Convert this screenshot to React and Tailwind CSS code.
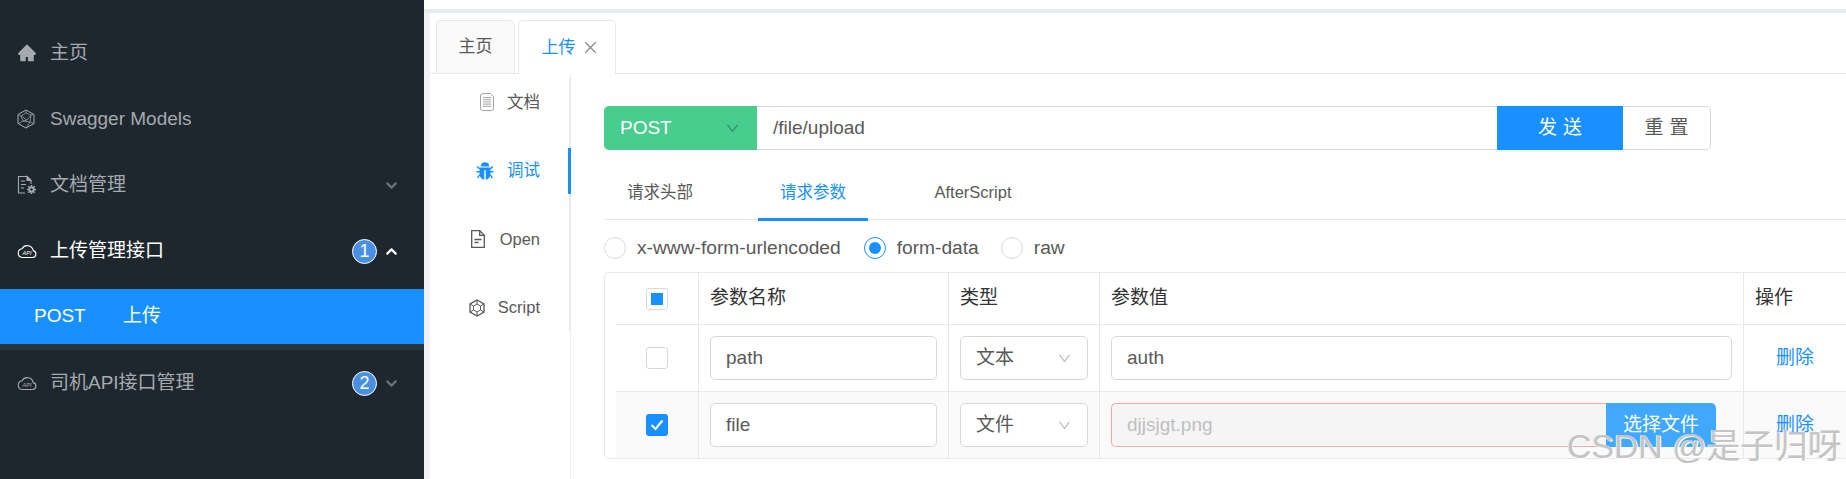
import React from 'react';
import { AiFillHome, AiFillBug, AiOutlineDown, AiOutlineClose } from 'react-icons/ai';
import { LuChevronDown, LuChevronUp } from 'react-icons/lu';

const ModelIcon = () => (
  <svg width="18" height="20" viewBox="0 0 18 20" fill="none" stroke="currentColor" strokeWidth="1">
    <path d="M9 1l8 4.500v9L9 19l-8-4.500v-9z" />
    <path d="M9 1v3l5 2 3-.5M14 6l-1 7 4 1.500M13 13l-4 6M13 13l-7-1-5 2.500M6 12L4 7 1 5.500M4 7l5-3M4 7l6 4 4-5M6 12l4-1" strokeWidth="0.7" />
  </svg>
);

const DocGearIcon = () => (
  <svg width="20" height="20" viewBox="0 0 20 20" fill="none" stroke="currentColor" strokeWidth="1.100">
    <path d="M8 18H1.500V1.500H10l4 4v3.500" />
    <path d="M10 1.500l4 4h-4z" fill="currentColor" />
    <path d="M4 6h4M4 9.500h5M4 13h3" />
    <circle cx="14.500" cy="14.500" r="2.200" strokeWidth="2" />
    <path d="M14.500 10v1.500M14.500 17.500V19M10 14.500h1.500M17.500 14.500H19M11.300 11.300l1 1M16.700 16.700l1 1M11.300 17.700l1-1M16.700 12.300l1-1" strokeWidth="1.600" />
  </svg>
);

const ApiCloudIcon = () => (
  <svg width="20" height="16" viewBox="0 0 20 16" fill="none" stroke="currentColor" strokeWidth="1.100">
    <path d="M5 14.500h10.500a3.500 3.500 0 0 0 .7-6.900A6 6 0 0 0 5 5.800a4.400 4.400 0 0 0 0 8.700z" />
    <text x="10" y="12.300" textAnchor="middle" fontSize="5.500" fontStyle="italic" stroke="none" fill="currentColor" fontFamily="Liberation Sans">API</text>
  </svg>
);

const SheetIcon = () => (
  <svg width="14" height="18" viewBox="0 0 14 18" fill="none" stroke="#a3a3a3" strokeWidth="1">
    <path d="M3 .5h7.500l3 3V15.500a2 2 0 0 1-2 2H2.500a2 2 0 0 1-2-2V3a2.500 2.500 0 0 1 2.500-2.500z" />
    <path d="M3 4.500h8M3 6.700h8M3 8.900h8M3 11.100h8M3 13.300h8" />
  </svg>
);

const OpenFileIcon = () => (
  <svg width="14" height="18" viewBox="0 0 14 18" fill="none" stroke="currentColor" strokeWidth="1.300">
    <path d="M.7.7h8l4.600 4.600v12H.7z" />
    <path d="M8.700.7v4.600h4.600M3.500 9.500h7M3.500 12.500h4" />
  </svg>
);

const ScriptIcon = () => (
  <svg width="18" height="18" viewBox="0 0 18 18" fill="none" stroke="currentColor" strokeWidth="1.300">
    <path d="M9 1l7 4v8l-7 4-7-4V5z" />
    <path d="M9 5l3.500 2v4L9 13l-3.500-2V7zM9 1v4M2 5l3.500 2M16 5l-3.500 2M9 13v4M2 13l3.500-2M16 13l-3.500-2" strokeWidth="1" />
  </svg>
);

const Badge = ({ n }) => (
  <span className="flex h-[25px] w-[25px] items-center justify-center rounded-full border border-white bg-[#4a90e2] text-[18px] text-white">
    {n}
  </span>
);

const MenuRow = ({ icon, label, badge, chevron, active }) => (
  <div className={`flex h-[66px] items-center pl-[17px] pr-[24px] text-[19px] ${active ? 'text-white' : 'text-[#a5aaae]'}`}>
    <span className="flex w-[33px] shrink-0 items-center">{icon}</span>
    <span className="flex-1">{label}</span>
    {badge && <Badge n={badge} />}
    {chevron === 'down' && <LuChevronDown size={17} strokeWidth={3} className="ml-[6px] text-[#6c7276]" />}
    {chevron === 'up' && <LuChevronUp size={17} strokeWidth={3} className="ml-[6px] text-white" />}
  </div>
);

const Sidebar = () => (
  <aside className="h-full w-[424px] shrink-0 bg-[#1f272e] pt-[20px]">
    <MenuRow icon={<AiFillHome size={20} />} label="主页" />
    <MenuRow icon={<ModelIcon />} label="Swagger Models" />
    <MenuRow icon={<DocGearIcon />} label="文档管理" chevron="down" />
    <MenuRow icon={<ApiCloudIcon />} label="上传管理接口" badge="1" chevron="up" active />
    <div className="mt-[5px] flex h-[55px] items-center bg-[#1890ff] pl-[34px] text-[19px] text-white">
      <span className="w-[89px]">POST</span>
      <span>上传</span>
    </div>
    <div className="h-[6px] bg-[#2a363c]" />
    <MenuRow icon={<ApiCloudIcon />} label="司机API接口管理" badge="2" chevron="down" />
  </aside>
);

const TabBar = () => (
  <div className="flex h-[61px] shrink-0 items-end gap-[3px] border-b border-[#e8e8e8] pl-[6px] text-[17px]">
    <div className="-mb-px flex h-[54px] w-[79px] items-center justify-center rounded-t-[5px] border border-[#e8e8e8] bg-[#fafafa] text-[#595959]">
      主页
    </div>
    <div className="-mb-px flex h-[54px] w-[98px] items-center justify-center gap-[6px] rounded-t-[5px] border border-b-0 border-[#e8e8e8] bg-white pl-[6px] text-[#1890ff]">
      <span>上传</span>
      <AiOutlineClose size={17} className="text-[#8c8c8c]" />
    </div>
  </div>
);

const SideNav = () => {
  const items = [
    { icon: <SheetIcon />, label: '文档', gap: 'gap-[13px]' },
    { icon: <AiFillBug size={20} className="text-[#1890ff]" />, label: '调试', gap: 'gap-[12px]', active: true },
    { icon: <OpenFileIcon />, label: 'Open', gap: 'gap-[15px]' },
    { icon: <ScriptIcon />, label: 'Script', gap: 'gap-[12px]' },
  ];
  return (
    <div className="h-full w-[141px] shrink-0 border-r border-[#eeeeee] pt-[5px]">
      <div className="relative -mr-px flex flex-col gap-[22.500px] border-r-2 border-[#e8e8e8] pr-[29px]">
        {items.map((it) => (
          <div
            key={it.label}
            className={`relative flex h-[46px] items-center justify-end text-[16.500px] ${it.gap} ${it.active ? 'text-[#1890ff]' : 'text-[#595959]'}`}
          >
            {it.icon}
            <span>{it.label}</span>
            {it.active && <span className="absolute right-[-31px] top-0 h-[46px] w-[3px] bg-[#1890ff]" />}
          </div>
        ))}
      </div>
    </div>
  );
};

const RequestBar = () => (
  <div className="flex h-[44px] w-[1107px] text-[19px]">
    <div className="flex w-[153px] items-center justify-between rounded-l-[5px] bg-[#49cd8e] pl-[16px] pr-[17px] text-white">
      <span>POST</span>
      <AiOutlineDown size={15} className="text-[#2f8f63]" />
    </div>
    <div className="flex flex-1 items-center border-y border-[#d9d9d9] pl-[16px] text-[#595959]">/file/upload</div>
    <div className="flex w-[126px] items-center justify-center bg-[#1890ff] pl-[6px] tracking-[0.32em] text-white shadow-[0_2px_0_rgba(0,0,0,0.04)]">
      发送
    </div>
    <div className="flex w-[88px] items-center justify-center rounded-r-[5px] border border-l-0 border-[#d9d9d9] pl-[6px] tracking-[0.32em] text-[#595959]">
      重置
    </div>
  </div>
);

const SubTabs = () => (
  <div className="mt-[26px] flex h-[44px] items-start border-b border-[#e8e8e8] pl-px text-[16.500px]">
    <div className="mr-[43px] w-[110px] text-center leading-[32px] text-[#595959]">请求头部</div>
    <div className="relative mr-[43px] h-[44px] w-[110px] text-center leading-[32px] text-[#1890ff]">
      请求参数
      <span className="absolute bottom-[-1px] left-0 h-[3px] w-full bg-[#1890ff]" />
    </div>
    <div className="w-[124px] text-center leading-[32px] text-[#595959]">AfterScript</div>
  </div>
);

const Radio = ({ label, checked }) => (
  <label className="flex items-center gap-[11px]">
    <span className={`flex h-[22px] w-[22px] items-center justify-center rounded-full border ${checked ? 'border-[#1890ff]' : 'border-[#d9d9d9]'}`}>
      {checked && <span className="h-[12px] w-[12px] rounded-full bg-[#1890ff]" />}
    </span>
    <span>{label}</span>
  </label>
);

const Radios = () => (
  <div className="mt-[17px] flex h-[22px] items-center text-[19.200px] text-[#595959]">
    <Radio label="x-www-form-urlencoded" />
    <div className="ml-[23px]"><Radio label="form-data" checked /></div>
    <div className="ml-[22px]"><Radio label="raw" /></div>
  </div>
);

const Check = ({ state }) => {
  if (state === 'on') {
    return (
      <span className="flex h-[22px] w-[22px] items-center justify-center rounded-[3px] bg-[#1890ff]">
        <svg width="14" height="12" viewBox="0 0 14 12" fill="none" stroke="#fff" strokeWidth="2">
          <path d="M1.500 6l4 4 7-8.500" />
        </svg>
      </span>
    );
  }
  return (
    <span className="flex h-[22px] w-[22px] items-center justify-center rounded-[3px] border border-[#d9d9d9] bg-white">
      {state === 'mixed' && <span className="h-[12px] w-[12px] bg-[#1890ff]" />}
    </span>
  );
};

const Field = ({ children, className = '' }) => (
  <div className={`flex h-[44px] items-center rounded-[5px] border border-[#d9d9d9] bg-white pl-[15px] text-[19px] text-[#595959] ${className}`}>
    {children}
  </div>
);

const TypeSelect = ({ value }) => (
  <Field className="w-full justify-between pr-[15px]">
    <span>{value}</span>
    <AiOutlineDown size={15} className="text-[#bfbfbf]" />
  </Field>
);

const cols = 'grid grid-cols-[83px_250px_151px_644px_1fr]';
const cell = 'flex items-center border-r border-[#e8e8e8] px-[11px]';

const Row = ({ check, name, type, value, striped }) => (
  <div className={`${cols} h-[67px] border-t border-[#e8e8e8] ${striped ? 'bg-[#fafafa]' : ''}`}>
    <div className={`${cell} justify-center`}><Check state={check} /></div>
    <div className={cell}><Field className="w-full">{name}</Field></div>
    <div className={cell}><TypeSelect value={type} /></div>
    <div className={cell}>{value}</div>
    <div className="flex items-center pl-[32px] text-[19px] text-[#1890ff]">删除</div>
  </div>
);

const ParamTable = () => (
  <div className="mt-[13px] h-[187px] w-[1250px] rounded-[5px] border border-[#e8e8e8] pl-[11px] text-[19px]">
    <div className={`${cols} h-[51px] text-[#333333]`}>
      <div className={`${cell} justify-center`}><Check state="mixed" /></div>
      <div className={cell}>参数名称</div>
      <div className={cell}>类型</div>
      <div className={cell}>参数值</div>
      <div className="flex items-center pl-[11px]">操作</div>
    </div>
    <Row check="off" name="path" type="文本" value={<Field className="w-full">auth</Field>} />
    <Row
      check="on"
      name="file"
      type="文件"
      striped
      value={
        <div className="flex h-[44px] w-[605px]">
          <div className="flex flex-1 items-center rounded-l-[5px] border border-r-0 border-[#f0a8a8] bg-[#f5f5f5] pl-[15px] text-[#bfbfbf]">
            djjsjgt.png
          </div>
          <div className="flex w-[110px] items-center justify-center rounded-r-[5px] bg-[#40a9ff] text-white">选择文件</div>
        </div>
      }
    />
  </div>
);

const Watermark = () => (
  <div className="absolute left-[1567px] top-[426px] whitespace-nowrap text-[33.800px] leading-[40px] text-[#c4c4c4] [text-shadow:1px_1px_0_#ffffff,-1px_0_0_#eeeeee]">
    CSDN @是子归呀
  </div>
);

export default function App() {
  return (
    <div className="relative flex h-[479px] w-[1846px] overflow-hidden bg-white font-['Liberation_Sans','Noto_Sans_CJK_SC',sans-serif]">
      <Sidebar />
      <div className="flex min-w-0 flex-1 flex-col">
        <div className="h-[9px] shrink-0 bg-white" />
        <div className="h-[4px] shrink-0 bg-[#e9ecef]" />
        <div className="flex min-h-0 flex-1 border-l-[6px] border-[#f0f2f5]">
          <div className="flex min-w-0 flex-1 flex-col">
            <TabBar />
            <div className="flex min-h-0 flex-1">
              <SideNav />
              <div className="min-w-0 flex-1 pl-[33px] pt-[32px]">
                <RequestBar />
                <SubTabs />
                <Radios />
                <ParamTable />
              </div>
            </div>
          </div>
        </div>
      </div>
      <Watermark />
    </div>
  );
}
